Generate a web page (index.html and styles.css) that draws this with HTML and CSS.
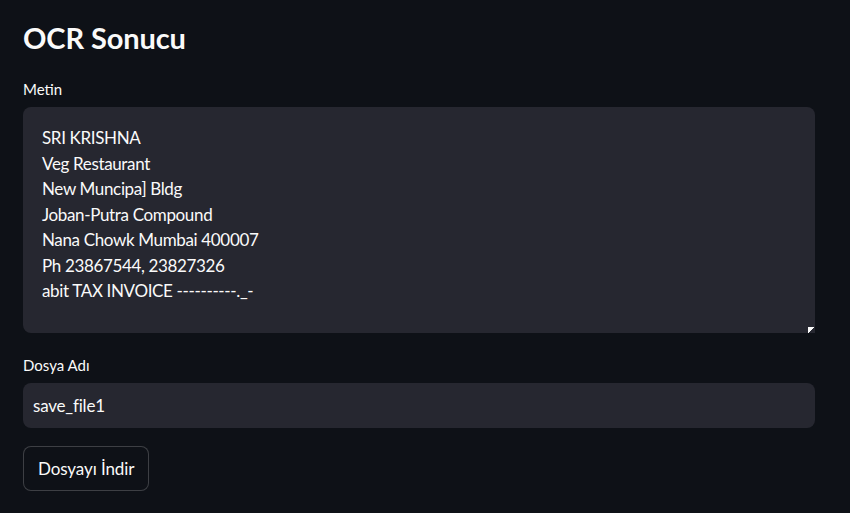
FILE: index.html
```html
<!DOCTYPE html>
<html lang="tr">
<head>
<meta charset="utf-8">
<title>OCR Sonucu</title>
<link rel="stylesheet" href="styles.css">
</head>
<body>
<main class="page">
  <h2 class="title">OCR Sonucu</h2>
  <div class="field">
    <label class="label" for="metin">Metin</label>
    <div class="textarea-wrap">
      <textarea id="metin" class="textarea" readonly>SRI KRISHNA
Veg Restaurant
New Muncipa] Bldg
Joban-Putra Compound
Nana Chowk Mumbai 400007
Ph 23867544, 23827326
abit TAX INVOICE ----------._-</textarea>
      <span class="grip"></span>
    </div>
  </div>
  <div class="field">
    <label class="label label-2" for="dosya">Dosya Adı</label>
    <input id="dosya" class="input" type="text" value="save_file1">
  </div>
  <button class="button" type="button">Dosyayı İndir</button>
</main>
</body>
</html>
```
FILE: styles.css
```css
html, body {
  margin: 0;
  padding: 0;
  background: #0e1117;
  color: #fafafa;
  font-family: "Lato", "Noto Sans", sans-serif;
}
.page {
  width: 792px;
  padding: 0 0 0 23px;
  display: flex;
  flex-direction: column;
  align-items: flex-start;
}
.title {
  margin: 0;
  padding-top: 18px;
  font-size: 29px;
  font-weight: 700;
  line-height: 40px;
  height: 40px;
  letter-spacing: -0.1px;
}
.field {
  width: 100%;
  display: flex;
  flex-direction: column;
}
.label {
  font-size: 15px;
  line-height: 20px;
  margin-top: 21px;
  height: 28px;
}
.label-2 {
  margin-top: 22px;
}
.textarea-wrap {
  position: relative;
  width: 100%;
  height: 226px;
}
.textarea {
  display: block;
  box-sizing: border-box;
  width: 100%;
  height: 226px;
  background: #262730;
  color: #fafafa;
  border: none;
  border-radius: 8px 8px 0 8px;
  outline: none;
  padding: 18px 19px 17px;
  font-family: inherit;
  font-size: 17px;
  letter-spacing: -0.35px;
  line-height: 25.5px;
  resize: none;
  overflow: hidden;
}
.grip {
  position: absolute;
  right: 1px;
  bottom: 0;
  width: 6px;
  height: 6px;
  background: linear-gradient(135deg, #fafafa 0 55%, #262730 55% 100%);
}
.input {
  box-sizing: border-box;
  width: 100%;
  height: 45px;
  background: #262730;
  color: #fafafa;
  border: none;
  border-radius: 8px;
  outline: none;
  padding: 0 10px;
  font-family: inherit;
  font-size: 17px;
  letter-spacing: -0.2px;
}
.button {
  margin-top: 18px;
  box-sizing: border-box;
  height: 45px;
  padding: 0 14px;
  background: #0e1117;
  color: #fafafa;
  border: 1px solid rgba(250, 250, 250, 0.2);
  border-radius: 8px;
  font-family: inherit;
  font-size: 17px;
  letter-spacing: -0.1px;
}
```
